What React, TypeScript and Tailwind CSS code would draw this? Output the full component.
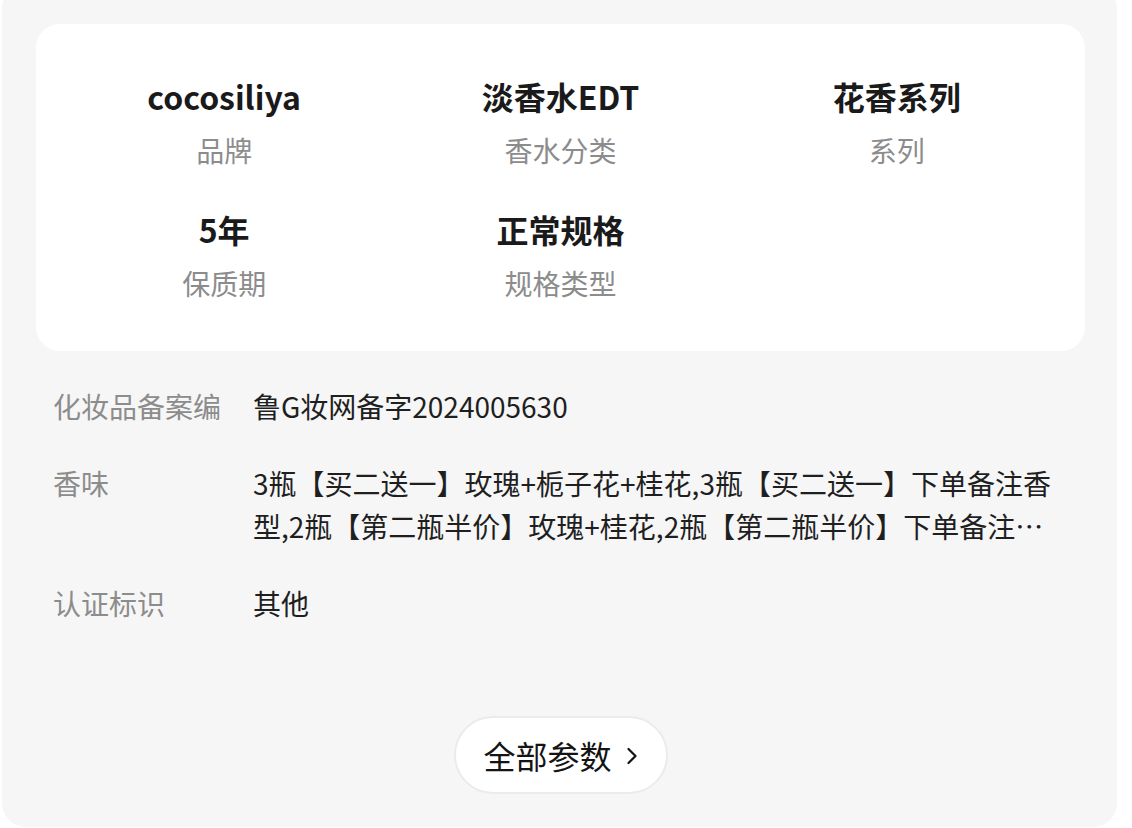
import { ChevronRight } from "lucide-react";

const SUMMARY = [
  { value: "cocosiliya", label: "品牌" },
  { value: "淡香水EDT", label: "香水分类" },
  { value: "花香系列", label: "系列" },
  { value: "5年", label: "保质期" },
  { value: "正常规格", label: "规格类型" },
];

const SPECS = [
  { label: "化妆品备案编", value: "鲁G妆网备字2024005630" },
  {
    label: "香味",
    value:
      "3瓶【买二送一】玫瑰+栀子花+桂花,3瓶【买二送一】下单备注香型,2瓶【第二瓶半价】玫瑰+桂花,2瓶【第二瓶半价】下单备注香型",
  },
  { label: "认证标识", value: "其他" },
];

const FONT = "font-['Noto_Sans_CJK_SC','Noto_Sans',sans-serif]";

export default function App() {
  return (
    <div className={`min-h-[828px] bg-white overflow-hidden ${FONT}`}>
      <div className="-mt-[16px] ml-[2px] w-[1115px] h-[843px] rounded-[24px] bg-[#f6f6f6] pt-[40px] pl-[34px] pr-[32px] flex flex-col">
        {/* Summary card */}
        <div className="bg-white rounded-[24px] h-[327px] px-5 pt-[50px]">
          <div className="grid grid-cols-3 gap-y-[37px]">
            {SUMMARY.map((s) => (
              <div key={s.label} className="flex flex-col items-center gap-3">
                <span className="text-[32px] leading-[44px] font-bold text-[#1a1a1a]">
                  {s.value}
                </span>
                <span className="text-[28px] leading-[40px] text-[#8c8c8c]">
                  {s.label}
                </span>
              </div>
            ))}
          </div>
        </div>

        {/* Spec list */}
        <div className="mt-[34px] pl-[17px] pr-[20px] flex flex-col gap-[34px]">
          {SPECS.map((s) => (
            <div key={s.label} className="flex text-[28px] leading-[43px]">
              <span className="w-[200px] shrink-0 text-[#8c8c8c]">{s.label}</span>
              <span className="flex-1 min-w-0 text-[#1f1f1f] line-clamp-2 break-all">
                {s.value}
              </span>
            </div>
          ))}
        </div>

        <div className="mt-[91px] flex justify-center">
          <button className="h-[78px] w-[214px] rounded-full bg-white border-2 border-[#ebebeb] flex items-center justify-center gap-[6px] pl-[8px] text-[32px] text-[#141414]">
            全部参数
            <ChevronRight size={28} strokeWidth={1.9} className="mt-[1px]" />
          </button>
        </div>
      </div>
    </div>
  );
}
